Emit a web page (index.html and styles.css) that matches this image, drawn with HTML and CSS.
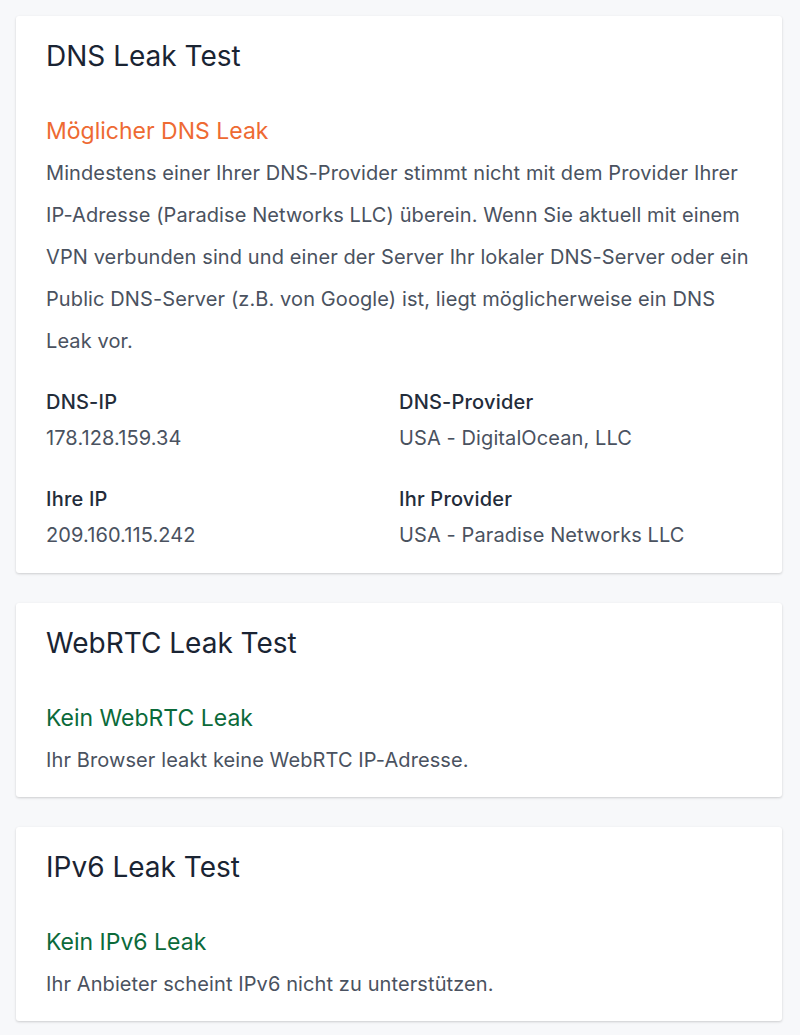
FILE: index.html
```html
<!DOCTYPE html>
<html lang="de">
<head>
<meta charset="utf-8">
<title>Leak Tests</title>
<link rel="stylesheet" href="styles.css">
</head>
<body>
<main class="page">
  <section class="card">
    <h2 class="card-title">DNS Leak Test</h2>
    <h3 class="status status-warn">Möglicher DNS Leak</h3>
    <p class="text">Mindestens einer Ihrer DNS-Provider stimmt nicht mit dem Provider Ihrer IP-Adresse (Paradise Networks LLC) überein. Wenn Sie aktuell mit einem VPN verbunden sind und einer der Server Ihr lokaler DNS-Server oder ein Public DNS-Server (z.B. von Google) ist, liegt möglicherweise ein DNS Leak vor.</p>
    <dl class="facts">
      <div class="fact"><dt>DNS-IP</dt><dd>178.128.159.34</dd></div>
      <div class="fact"><dt>DNS-Provider</dt><dd>USA - DigitalOcean, LLC</dd></div>
      <div class="fact"><dt>Ihre IP</dt><dd>209.160.115.242</dd></div>
      <div class="fact"><dt>Ihr Provider</dt><dd>USA - Paradise Networks LLC</dd></div>
    </dl>
  </section>
  <section class="card">
    <h2 class="card-title">WebRTC Leak Test</h2>
    <h3 class="status status-ok">Kein WebRTC Leak</h3>
    <p class="text">Ihr Browser leakt keine WebRTC IP-Adresse.</p>
  </section>
  <section class="card">
    <h2 class="card-title">IPv6 Leak Test</h2>
    <h3 class="status status-ok">Kein IPv6 Leak</h3>
    <p class="text">Ihr Anbieter scheint IPv6 nicht zu unterstützen.</p>
  </section>
</main>
</body>
</html>
```

FILE: styles.css
```css
* { box-sizing: border-box; }
html, body { margin: 0; padding: 0; }
body {
  background: #f7f8fa;
  font-family: Inter, "Noto Sans", sans-serif;
  color: #2d3748;
}
.page {
  display: flex;
  flex-direction: column;
  gap: 30px;
  padding: 16px 18px 16px 16px;
}
.card {
  background: #ffffff;
  border-radius: 3px;
  box-shadow: 0 1px 3px rgba(0, 0, 0, 0.12), 0 1px 2px rgba(0, 0, 0, 0.06);
  padding: 22px 30px 16px;
}
.card-title {
  margin: 0;
  font-size: 28px;
  line-height: 36px;
  font-weight: 400;
  color: #1a2433;
}
.status {
  margin: 36px 0 0;
  font-size: 23px;
  line-height: 42px;
  font-weight: 400;
}
.status-warn { color: #ee6a32; }
.status-ok { color: #0b6a3a; }
.text {
  margin: 0;
  font-size: 20px;
  line-height: 42px;
  letter-spacing: 0.1px;
  color: #4a5260;
}
.facts {
  display: grid;
  grid-template-columns: 1fr 1fr;
  row-gap: 25px;
  margin: 22px 0 4px;
}
.fact dt {
  font-size: 20px;
  line-height: 36px;
  font-weight: 500;
  letter-spacing: 0.2px;
  color: #232c3a;
}
.fact dd {
  margin: 0;
  font-size: 20px;
  line-height: 36px;
  letter-spacing: 0.1px;
  color: #4a5260;
}
```
